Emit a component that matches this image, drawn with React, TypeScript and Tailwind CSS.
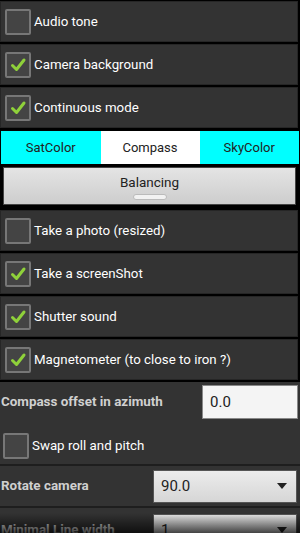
import React from "react";

const font = { fontFamily: "Roboto, 'Noto Sans', sans-serif" };

function Check({ checked }: { checked: boolean }) {
  return (
    <div className="flex h-[26px] w-[26px] shrink-0 items-center justify-center rounded-[2px] border-2 border-[#777] bg-[#444]">
      {checked && (
        <svg width="18" height="18" viewBox="0 0 18 18">
          <path d="M3.5 9.5 L7.5 13.5 L15 4" fill="none" stroke="#8fd13a" strokeWidth="3" strokeLinecap="round" strokeLinejoin="round" />
        </svg>
      )}
    </div>
  );
}

function CheckRow({ label, checked }: { label: string; checked: boolean }) {
  return (
    <div className="flex h-[41px] w-[298px] items-center gap-[3px] border border-[#262626] bg-[#333] pl-[4px]">
      <Check checked={checked} />
      <span className="text-[13.3px] text-white">{label}</span>
    </div>
  );
}

function Spinner({ value }: { value: string }) {
  return (
    <div className="flex h-[33px] w-[144px] items-center justify-between border border-[#555] bg-gradient-to-b from-[#ececec] to-[#d6d6d6] pl-[7px] pr-[8px]">
      <span className="text-[15px] text-[#222]">{value}</span>
      <svg width="12" height="8" viewBox="0 0 12 8">
        <path d="M1 1 L11 1 L6 7 Z" fill="#222" />
      </svg>
    </div>
  );
}

export default function App() {
  const top = [
    { label: "Audio tone", checked: false },
    { label: "Camera background", checked: true },
    { label: "Continuous mode", checked: true },
  ];
  const bottom = [
    { label: "Take a photo (resized)", checked: false },
    { label: "Take a screenShot", checked: true },
    { label: "Shutter sound", checked: true },
    { label: "Magnetometer (to close to iron ?)", checked: true },
  ];

  return (
    <div className="relative h-[533px] w-[300px] overflow-hidden bg-black pt-[1px]" style={font}>
      <div className="flex flex-col gap-[2px]">
        {top.map((r) => (
          <CheckRow key={r.label} label={r.label} checked={r.checked} />
        ))}
      </div>

      <div className="mt-[3px] ml-[1px] flex h-[33px] w-[298px] text-[13px] text-[#222]">
        <div className="flex flex-1 items-center justify-center bg-[#00ffff]">SatColor</div>
        <div className="flex w-[99px] items-center justify-center bg-white">Compass</div>
        <div className="flex flex-1 items-center justify-center bg-[#00ffff]">SkyColor</div>
      </div>

      <div className="mx-[3px] mt-[3px] flex h-[38px] w-[293px] flex-col items-center border border-[#444] bg-gradient-to-b from-[#e4e4e4] to-[#cdcdcd] pt-[5px]">
        <span className="text-[13.5px] leading-[18px] text-[#222]">Balancing</span>
        <div className="mt-[3px] h-[6px] w-[34px] rounded-full border border-[#bbb] bg-[#f2f2f2]" />
      </div>

      <div className="mt-[5px] flex flex-col gap-[2px]">
        {bottom.map((r) => (
          <CheckRow key={r.label} label={r.label} checked={r.checked} />
        ))}
      </div>

      <div className="mt-[2px] h-[200px] bg-[#333] pt-[3px]">
        <div className="flex h-[34px] items-center justify-between pl-[1px] pr-[2px]">
          <span className="text-[13.4px] font-bold text-[#d0d0d0]">Compass offset in azimuth</span>
          <div className="flex h-[34px] w-[96px] items-center border border-[#888] bg-[#f4f4f4] pl-[7px] text-[15px] text-[#222]">
            0.0
          </div>
        </div>
        <div className="mt-[14px] flex h-[25px] items-center gap-[3px] pl-[3px]">
          <Check checked={false} />
          <span className="text-[13.3px] text-white">Swap roll and pitch</span>
        </div>
        <div className="mt-[6px] h-[2px] bg-[#1e1e1e]" />
        <div className="flex h-[40px] items-center justify-between pl-[1px] pr-[3px]">
          <span className="text-[13.4px] font-bold text-[#d0d0d0]">Rotate camera</span>
          <Spinner value="90.0" />
        </div>
        <div className="h-[2px] bg-[#1e1e1e]" />
        <div className="flex h-[40px] items-center justify-between pl-[1px] pr-[3px] pt-[4px]">
          <span className="text-[13.4px] font-bold text-[#d0d0d0]">Minimal Line width</span>
          <Spinner value="1" />
        </div>
      </div>

      <div className="pointer-events-none absolute bottom-0 left-0 h-[20px] w-full bg-gradient-to-b from-transparent to-black/70" />
    </div>
  );
}
